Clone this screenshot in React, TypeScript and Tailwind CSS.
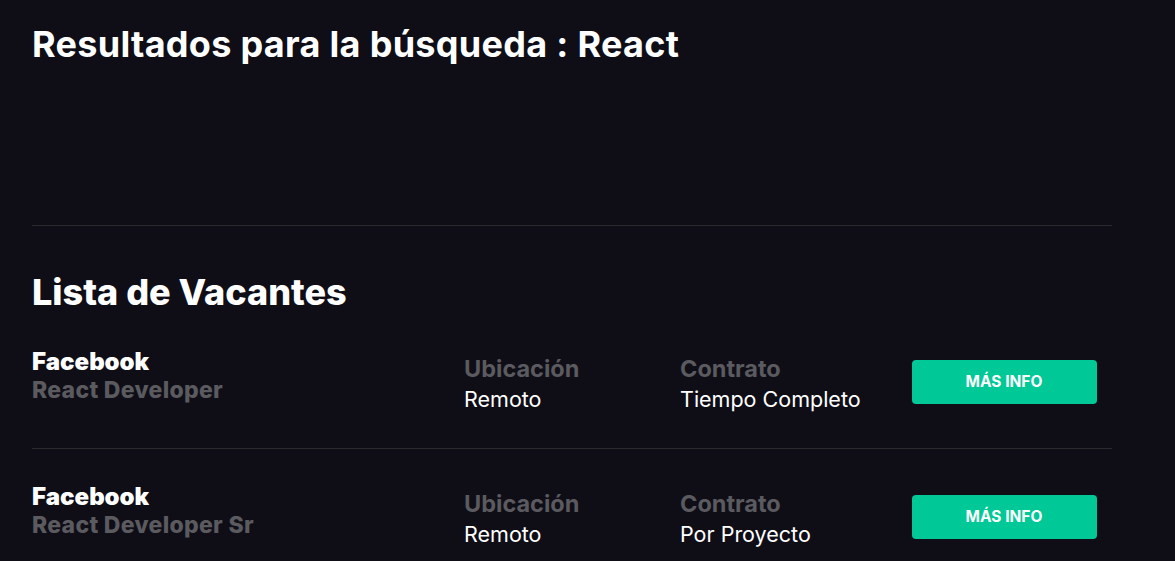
import * as React from "react";

interface Vacante {
  empresa: string;
  titulo: string;
  ubicacion: string;
  contrato: string;
}

const vacantes: Vacante[] = [
  { empresa: "Facebook", titulo: "React Developer", ubicacion: "Remoto", contrato: "Tiempo Completo" },
  { empresa: "Facebook", titulo: "React Developer Sr", ubicacion: "Remoto", contrato: "Por Proyecto" },
];

const Dato: React.FC<{ label: string; valor: string }> = ({ label, valor }) => (
  <div className="flex flex-col mt-[40px]">
    <span className="text-[23.5px] leading-[30px] font-bold text-[#5a5a5f]">{label}</span>
    <span className="text-[21.5px] leading-[30px] text-white">{valor}</span>
  </div>
);

const VacanteRow: React.FC<{ vacante: Vacante }> = ({ vacante }) => {
  return (
    <div className="grid grid-cols-5 items-start h-[135px] border-b border-[#2a2a2f]">
      <div className="col-span-2 flex flex-col mt-[34px] text-[24px] leading-[28px] font-black">
        <span className="text-white">{vacante.empresa}</span>
        <span className="text-[#5a5a5f] text-[23px] font-extrabold tracking-[0.3px]">{vacante.titulo}</span>
      </div>
      <Dato label="Ubicación" valor={vacante.ubicacion} />
      <Dato label="Contrato" valor={vacante.contrato} />
      <div className="flex justify-center mt-[46px]">
        <button className="w-[185px] h-[44px] rounded bg-[#00c897] text-white text-[15.5px] font-bold uppercase">
          Más Info
        </button>
      </div>
    </div>
  );
};

export default function App() {
  return (
    <div className="min-h-[561px] bg-[#0f0e17] px-8 pt-[22px] font-['Inter',sans-serif]">
      <div className="w-[1080px]">
        <h1 className="text-[36px] leading-[44px] font-bold text-white tracking-[0.3px]">
          Resultados para la búsqueda : React
        </h1>
        <div className="mt-[159px] border-t border-[#2a2a2f]"></div>

        <h2 className="mt-[44px] text-[36px] leading-[44px] font-extrabold text-white">
          Lista de Vacantes
        </h2>
        <div>
          {vacantes.map((v, i) => (
            <VacanteRow key={i} vacante={v} />
          ))}
        </div>
      </div>
    </div>
  );
}
